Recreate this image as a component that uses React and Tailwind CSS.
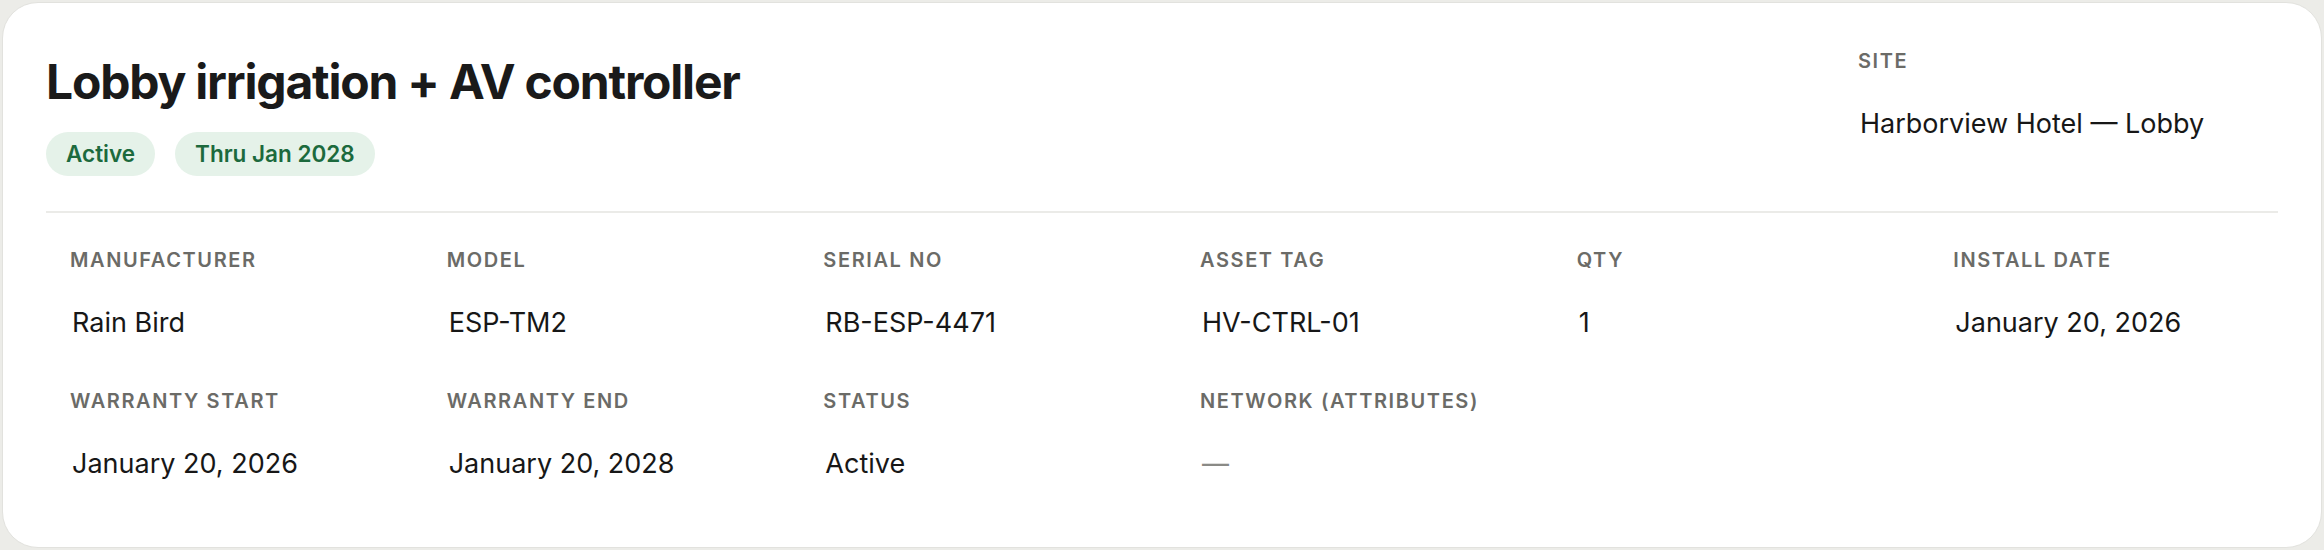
const fieldsRow1 = [
  { label: "Manufacturer", value: "Rain Bird" },
  { label: "Model", value: "ESP-TM2" },
  { label: "Serial No", value: "RB-ESP-4471" },
  { label: "Asset Tag", value: "HV-CTRL-01" },
  { label: "Qty", value: "1" },
  { label: "Install Date", value: "January 20, 2026" },
];

const fieldsRow2 = [
  { label: "Warranty Start", value: "January 20, 2026" },
  { label: "Warranty End", value: "January 20, 2028" },
  { label: "Status", value: "Active" },
  { label: "Network (Attributes)", value: "—", muted: true },
];

function Field({ label, value, muted }) {
  return (
    <div className="flex flex-col">
      <span className="text-[20px] leading-[28px] font-semibold uppercase tracking-[0.08em] text-[#6b6b67]">
        {label}
      </span>
      <span
        className={`mt-[29px] text-[27px] leading-[40px] pl-[2px] ${
          muted ? "text-[#8a8a86]" : "text-[#171717]"
        }`}
      >
        {value}
      </span>
    </div>
  );
}

function Badge({ children }) {
  return (
    <span className="inline-flex items-center h-[44px] px-[20px] rounded-full bg-[#e5f2e9] text-[#1c6a3d] text-[22.5px] font-semibold">
      {children}
    </span>
  );
}

export default function App() {
  return (
    <div
      className="h-[550px] p-[2px] bg-[#ecece8]"
      style={{ fontFamily: "Inter, 'Noto Sans', sans-serif" }}
    >
      <div className="h-full rounded-[36px] bg-white border border-[#e2e2de] px-[43px] pt-[44px]">
        {/* header */}
        <div className="flex items-start justify-between border-b-2 border-[#ebebe8] pb-[35px]">
          <div className="pt-[5px]">
            <h1 className="text-[48px] leading-[60px] font-bold tracking-tight text-[#1a1a1a]">
              Lobby irrigation + AV controller
            </h1>
            <div className="mt-[20px] flex gap-[20px]">
              <Badge>Active</Badge>
              <Badge>Thru Jan 2028</Badge>
            </div>
          </div>
          <div className="w-[420px] shrink-0">
            <Field label="Site" value="Harborview Hotel — Lobby" />
          </div>
        </div>

        {/* details */}
        <div className="grid grid-cols-6 gap-x-[28px] gap-y-[44px] pt-[33px]">
          {fieldsRow1.map((f) => (
            <div key={f.label} className="px-[24px]">
              <Field {...f} />
            </div>
          ))}
          {fieldsRow2.map((f) => (
            <div key={f.label} className="px-[24px]">
              <Field {...f} />
            </div>
          ))}
        </div>
      </div>
    </div>
  );
}
